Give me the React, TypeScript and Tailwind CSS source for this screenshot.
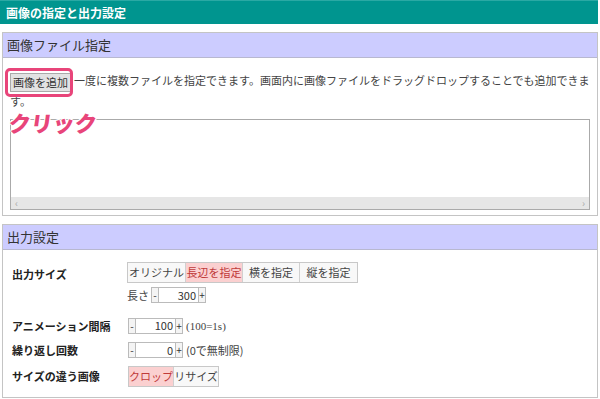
const jp = { fontFamily: '"Noto Sans CJK JP", "Liberation Sans", sans-serif' }

function Spinner({ value }: { value: string }) {
  return (
    <span className="inline-flex items-stretch h-[16px] text-[10px] leading-none text-[#333]">
      <span className="w-[8px] border border-[#bbb] bg-[#f4f4f4] flex items-center justify-center">-</span>
      <span className="w-[39px] border-y border-[#bbb] bg-white flex items-center justify-end pr-[2px] text-[11px]">{value}</span>
      <span className="w-[8px] border border-[#bbb] bg-[#f4f4f4] flex items-center justify-center">+</span>
    </span>
  )
}

function Seg({ items, active, widths }: { items: string[]; active: number; widths: string[] }) {
  return (
    <div className="inline-flex h-[21px] border border-[#c8c8c8] text-[11px] text-[#444] whitespace-nowrap">
      {items.map((t, i) => (
        <span
          key={t}
          className={
            'flex items-center justify-center ' +
            widths[i] +
            (i > 0 ? ' border-l border-[#d0d0d0]' : '') +
            (i === active ? ' bg-[#fbd0d0] text-[#c03a3a]' : ' bg-[#f8f8f8]')
          }
        >
          {t}
        </span>
      ))}
    </div>
  )
}

export default function App() {
  return (
    <div className="w-[600px] h-[399px] bg-white overflow-hidden text-[#333]" style={jp}>
      {/* Title bar */}
      <div className="w-[598px] h-[24px] bg-[#00958f] border-t border-[#2aa9a4] flex items-center pl-[6px] text-white text-[12px] font-bold">
        画像の指定と出力設定
      </div>

      {/* Image file panel */}
      <div className="mt-[8px] ml-[2px] w-[596px] h-[184px] border border-[#c4c4c4] flex flex-col">
        <div className="h-[25px] bg-[#ccccff] border-b border-[#b8b8d0] flex items-center pl-[4px] text-[13px] text-[#333]">
          画像ファイル指定
        </div>
        <div className="relative px-[7px] pt-[13px] text-[11px] leading-[19px] text-[#444]">
          <span className="inline-flex items-center align-middle h-[19px] px-[2px] mr-[3px] bg-[#e2e2e2] border border-[#aaa] text-[11px] text-[#333]">画像を追加</span>
          一度に複数ファイルを指定できます。画面内に画像ファイルをドラッグドロップすることでも追加できます。
          <div className="mt-[8px] h-[91px] border border-[#aaa] flex flex-col justify-end">
            <div className="h-[12px] bg-[#e6e6e6] flex items-center justify-between px-[4px] text-[10px] text-[#aaa] leading-none">
              <span>‹</span>
              <span>›</span>
            </div>
          </div>
          {/* annotation overlay */}
          <span className="absolute left-[2px] top-[10px] w-[68px] h-[29px] rounded-[5px] border-[3px] border-[#e8457a]" />
          <span
            className="absolute left-[6px] top-[53px] text-[22px] font-black text-[#e8457a] leading-none"
            style={{ textShadow: '1px 0 0 #fff, -1px 0 0 #fff, 0 1px 0 #fff, 0 -1px 0 #fff, 1px 1px 0 #fff, -1px -1px 0 #fff', transform: 'skewX(-8deg)' }}
          >
            クリック
          </span>
        </div>
      </div>

      {/* Output settings panel */}
      <div className="mt-[8px] ml-[2px] w-[596px] h-[174px] border border-[#c4c4c4] flex flex-col">
        <div className="h-[25px] bg-[#ccccff] border-b border-[#b8b8d0] flex items-center pl-[4px] text-[13px] text-[#333]">
          出力設定
        </div>
        <div className="pl-[9px] pt-[12px] text-[11px]">
          <div className="flex">
            <div className="w-[115px] pt-[4px] font-bold text-[#222]">出力サイズ</div>
            <div className="flex flex-col">
              <Seg items={['オリジナル', '長辺を指定', '横を指定', '縦を指定']} active={1} widths={['w-[57px]', 'w-[57px]', 'w-[57px]', 'w-[58px]']} />
              <div className="flex items-center gap-[2px] mt-[4px] text-[#444]">
                長さ <Spinner value="300" />
              </div>
            </div>
          </div>
          <div className="flex items-center mt-[14px]">
            <div className="w-[116px] font-bold text-[#222]">アニメーション間隔</div>
            <Spinner value="100" />
            <span className="ml-[3px] text-[11px] text-[#444]" style={{ fontFamily: '"Liberation Serif", serif' }}>(100=1s)</span>
          </div>
          <div className="flex items-center mt-[8px]">
            <div className="w-[116px] font-bold text-[#222]">繰り返し回数</div>
            <Spinner value="0" />
            <span className="ml-[3px] text-[11px] text-[#444]">(0で無制限)</span>
          </div>
          <div className="flex items-center mt-[7px]">
            <div className="w-[116px] font-bold text-[#222]">サイズの違う画像</div>
            <Seg items={['クロップ', 'リサイズ']} active={0} widths={['w-[44px]', 'w-[45px]']} />
          </div>
        </div>
      </div>
    </div>
  )
}
